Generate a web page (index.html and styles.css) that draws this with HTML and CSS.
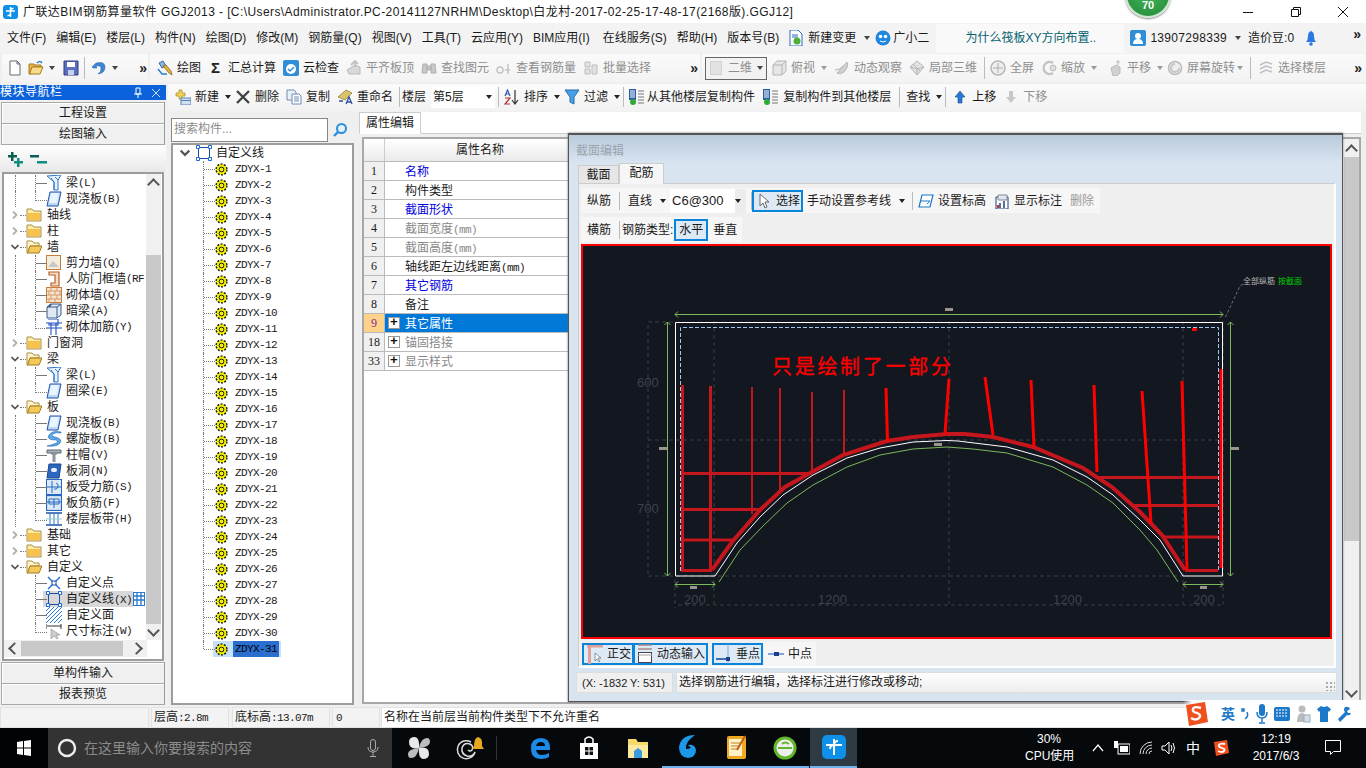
FILE: index.html
```html
<!DOCTYPE html>
<html lang="zh">
<head>
<meta charset="utf-8">
<title>广联达BIM钢筋算量软件</title>
<link rel="stylesheet" href="styles.css">
</head>
<body>
<svg class="defs" width="0" height="0">
  <symbol id="new" viewBox="0 0 16 16"><path d="M3 1h7l3 3v11H3z" fill="#fff" stroke="#667"/><path d="M10 1v3h3z" fill="#dde" stroke="#667"/></symbol>
  <symbol id="open" viewBox="0 0 16 16"><path d="M1 4h5l1 1h6v2H5L3 14H1z" fill="#e9b64c" stroke="#a57a1e"/><path d="M4 7h11l-3 7H1.500z" fill="#f8da8a" stroke="#a57a1e"/><path d="M9 3q3-3 5 0" fill="none" stroke="#3a7fc8" stroke-width="1.500"/></symbol>
  <symbol id="save" viewBox="0 0 16 16"><path d="M1 1h14v14H1z" fill="#5a6fc0" stroke="#2f3c80"/><path d="M4 2h8v5H4z" fill="#fff"/><path d="M5 10h6v5H5z" fill="#c8cfe8"/></symbol>
  <symbol id="undo" viewBox="0 0 16 16"><path d="M5 3l-4 4 1 1h4L5 6q5-1 5 3 0 3-3 5 7-1 7-7 0-6-9-4z" fill="#3f86d2" stroke="#1f5ea8" stroke-width=".5"/></symbol>
  <symbol id="draw" viewBox="0 0 16 16"><path d="M2 3l4-2 3 5-4 2z" fill="#8db5e0" stroke="#3a6ea5"/><path d="M6 6l6 7 3 2-1-4-5-6z" fill="#e6b43c" stroke="#7a5a10" stroke-width=".7"/><path d="M1 9l4 5h5" fill="none" stroke="#2a7fd0" stroke-width="1.500"/></symbol>
  <symbol id="cloud" viewBox="0 0 16 16"><rect x="0" y="0" width="16" height="16" rx="2" fill="#2e8fd8"/><circle cx="8" cy="9" r="5" fill="#fff"/><path d="M5 9l2 2 4-4" fill="none" stroke="#2e8fd8" stroke-width="1.500"/></symbol>
  <symbol id="flat" viewBox="0 0 16 16"><path d="M1 10l8-5 5 2v7H3z" fill="#d8d8d8" stroke="#bbb"/><path d="M9 1v6M5 5l4-4 3 3" fill="none" stroke="#c4c4c4" stroke-width="2"/></symbol>
  <symbol id="binoc" viewBox="0 0 16 16"><path d="M2 4h4v9H1zM10 4h4l1 9h-5zM6 6h4v4H6z" fill="#c8c8c8" stroke="#b0b0b0"/></symbol>
  <symbol id="glass" viewBox="0 0 16 16"><circle cx="4" cy="10" r="3" fill="none" stroke="#c4c4c4" stroke-width="1.500"/><path d="M9 10h5M12 4v10" stroke="#c4c4c4" stroke-width="1.500"/></symbol>
  <symbol id="batch" viewBox="0 0 16 16"><path d="M2 2h5v5H2zM2 9h5v5H2zM9 5h5v9H9z" fill="#e2e2e2" stroke="#bdbdbd"/></symbol>
  <symbol id="cube" viewBox="0 0 16 16"><path d="M2 5l4-4h9v10l-4 4H2z" fill="#e6e6e6" stroke="#b4b4b4"/><path d="M2 5h9v10M11 5l4-4" fill="none" stroke="#b4b4b4"/></symbol>
  <symbol id="orbit" viewBox="0 0 16 16"><path d="M3 13L13 2q2 5-3 10-4 3-7 1z" fill="#cfcfcf" stroke="#b8b8b8"/><path d="M1 10q5 0 8-4" fill="none" stroke="#b0b0b0"/></symbol>
  <symbol id="local3d" viewBox="0 0 16 16"><path d="M8 1l7 6-7 8-7-8z" fill="#e2e2e2" stroke="#b6b6b6"/><path d="M1 7l7 2 7-2M8 9v6M4 4l7 7" fill="none" stroke="#b6b6b6"/></symbol>
  <symbol id="full" viewBox="0 0 16 16"><circle cx="8" cy="8" r="7" fill="#eee" stroke="#b6b6b6" stroke-width="1.500"/><path d="M8 3v10M3 8h10" stroke="#b0b0b0"/></symbol>
  <symbol id="zoomg" viewBox="0 0 16 16"><path d="M12 3a6 6 0 1 0 0 10" fill="none" stroke="#c4c4c4" stroke-width="2.500"/><circle cx="12" cy="8" r="3" fill="#ddd" stroke="#bbb"/></symbol>
  <symbol id="pan" viewBox="0 0 16 16"><path d="M4 8l5-3 4 2v6l-3 3H6z" fill="#d0d0d0" stroke="#bbb"/><path d="M11 0v5M9 2h4" stroke="#bbb"/></symbol>
  <symbol id="rot" viewBox="0 0 16 16"><circle cx="8" cy="8" r="6.500" fill="#eee" stroke="#bbb" stroke-width="1.500"/><path d="M8 4a4 4 0 1 0 4 4" fill="none" stroke="#c4c4c4" stroke-width="2"/></symbol>
  <symbol id="floors" viewBox="0 0 16 16"><path d="M2 5l6-3 6 2M2 9l6-3 6 2M2 13l6-3 6 2" fill="none" stroke="#c0c0c0" stroke-width="1.500"/></symbol>
  <symbol id="plusnew" viewBox="0 0 16 16"><path d="M4 1h3v3h3v3H7v3H4V7H1V4h3z" fill="#f0d25a" stroke="#a88620" stroke-width=".7"/><path d="M6 9h10v7H6z" fill="#cfe0f2" stroke="#5b84b4"/><path d="M6 11.500h10" stroke="#5b84b4"/></symbol>
  <symbol id="cross" viewBox="0 0 16 16"><path d="M2 2l12 12M14 2L2 14" stroke="#444" stroke-width="2.400"/></symbol>
  <symbol id="copy" viewBox="0 0 16 16"><path d="M1 1h7l2 2v8H1z" fill="#e8f0f8" stroke="#6c8cb0"/><path d="M6 5h7l2 2v8H6z" fill="#fff" stroke="#6c8cb0"/><path d="M8 8h5M8 10h5M8 12h5" stroke="#6c8cb0"/></symbol>
  <symbol id="rename" viewBox="0 0 16 16"><path d="M1 8l8-7 6 3-7 7z" fill="#d8c26c" stroke="#8a7420" stroke-width=".7"/><path d="M2 12h4M9 15l3-7 3 7M10 13h4" fill="none" stroke="#2c4ea0" stroke-width="1.300"/></symbol>
  <symbol id="sort" viewBox="0 0 16 16"><path d="M1 7l2.500-6L6 7M2 5h3" fill="none" stroke="#3058b0" stroke-width="1.200"/><path d="M1 9h5l-5 6h5" fill="none" stroke="#b03030" stroke-width="1.200"/><path d="M11 1v13M8 11l3 4 3-4" fill="none" stroke="#333" stroke-width="1.200"/></symbol>
  <symbol id="filter" viewBox="0 0 16 16"><path d="M1 1h14L10 8v7L6 13V8z" fill="#4aa0e6" stroke="#1f6cb0"/></symbol>
  <symbol id="fromf" viewBox="0 0 16 16"><path d="M1 0h7v11H1z" fill="#2c5ea8"/><path d="M2 2h5M2 4h5M2 6h5M2 8h5" stroke="#fff"/><path d="M10 2h6M10 5h6M10 8h6M10 11h6M10 14h6" stroke="#777"/><circle cx="5" cy="13" r="3" fill="#2fa83c"/></symbol>
  <symbol id="up" viewBox="0 0 16 16"><path d="M8 2l5 6h-3v6H6V8H3z" fill="#2c78d0" stroke="#1a4f92" stroke-width=".6"/></symbol>
  <symbol id="down" viewBox="0 0 16 16"><path d="M8 14l5-6h-3V2H6v6H3z" fill="#c8c8c8"/></symbol>
  <symbol id="gear" viewBox="0 0 13 13"><circle cx="6.500" cy="6.500" r="5.400" fill="#f4f100" stroke="#111" stroke-width="1.400" stroke-dasharray="2 1.400"/><circle cx="6.500" cy="6.500" r="2.400" fill="#f4f100" stroke="#111"/></symbol>
  <symbol id="custline" viewBox="0 0 16 16"><rect x="2.500" y="2.500" width="11" height="11" fill="none" stroke="#1c4fa8"/><path d="M.5.500h3v3h-3zM12.500.500h3v3h-3zM.5 12.500h3v3h-3zM12.500 12.500h3v3h-3z" fill="#fff" stroke="#1c6ad0"/></symbol>
  <symbol id="fclosed" viewBox="0 0 16 16"><path d="M1 2h5l2 2h7v10H1z" fill="#ffe9a8" stroke="#a89048"/><path d="M2 6h12v7H2z" fill="#f6c24c"/></symbol>
  <symbol id="fopen" viewBox="0 0 16 16"><path d="M1 2h5l2 2h5v3H4l-2 7H1z" fill="#fff3c8" stroke="#a89048"/><path d="M4 7h12l-3 7H1.500z" fill="#f6c858" stroke="#a07c28"/></symbol>
  <symbol id="cv" viewBox="0 0 8 8"><path d="M.5 2l3.500 3.500L7.500 2" fill="none" stroke="#555" stroke-width="1.700"/></symbol>
  <symbol id="cr" viewBox="0 0 8 8"><path d="M2 .5l3.500 3.500L2 7.500" fill="none" stroke="#b0b0b0" stroke-width="1.900"/></symbol>
  <symbol id="beam" viewBox="0 0 16 16"><path d="M1 1l14-1-3 5v10H8V7z" fill="#e8f2fb" stroke="#2f78c8"/><path d="M5 3l3 4M9 2l3 3M8 7v8" stroke="#2f78c8"/></symbol>
  <symbol id="slab" viewBox="0 0 16 16"><path d="M4 1h11l-3 14H1z" fill="#bcd8f4" stroke="#1c54a8"/><path d="M5 2h8l-2 10H3z" fill="#e8f4ff"/></symbol>
  <symbol id="shear" viewBox="0 0 16 16"><rect x=".5" y=".5" width="14" height="14" fill="#f4ecdc" stroke="#c87c3c"/><path d="M2 12l5-6 6 6z" fill="#c8c8c8"/></symbol>
  <symbol id="rfwall" viewBox="0 0 16 16"><path d="M3 1h10v14H5v-3h4V4H3z" fill="#f6dcc0" stroke="#b8602c" stroke-width="1.200"/></symbol>
  <symbol id="brick" viewBox="0 0 16 16"><rect x=".5" y=".5" width="15" height="15" fill="#f6e4d0" stroke="#c87c3c"/><path d="M0 4h16M0 8h16M0 12h16M5 0v4M11 0v4M3 4v4M9 4v4M14 4v4M5 8v4M11 8v4M3 12v4M9 12v4" stroke="#d0894c" stroke-width=".8"/></symbol>
  <symbol id="dark" viewBox="0 0 16 16"><path d="M1 4l4-3h10v11l-4 3H1z" fill="#dfe9f4" stroke="#3a5a88"/><path d="M1 4h10v11M11 4l4-3" fill="none" stroke="#3a5a88"/><path d="M5 1l-2 3" stroke="#3a5a88" stroke-width="2"/></symbol>
  <symbol id="masonry" viewBox="0 0 16 16"><path d="M0 4h16M3 4v2h9V4M0 9h16M5 4v12M10 4v12M2 0h10v4" fill="none" stroke="#1c4fc0" stroke-width="1.100"/></symbol>
  <symbol id="spiral" viewBox="0 0 16 16"><path d="M15 1Q6-1 3 4t7 5q4 2-2 4t-7 2q10 1 13-3t-5-6Q4 5 7 3t8-1z" fill="#5ca8e8" stroke="#1c64b4" stroke-width=".6"/></symbol>
  <symbol id="cap" viewBox="0 0 16 16"><path d="M1 3h14v3H1z" fill="#a8b0b8" stroke="#606870"/><path d="M4 6h8l-2 2H6zM6.500 8h3v7h-3z" fill="#8c949c"/></symbol>
  <symbol id="hole" viewBox="0 0 16 16"><path d="M3 1h12l-2 14H1z" fill="#2c68c0" stroke="#1c4490"/><rect x="5" y="5" width="6" height="4" rx="2" fill="#eaf4ff"/></symbol>
  <symbol id="sbar" viewBox="0 0 16 16"><rect x=".5" y=".5" width="15" height="15" fill="#dce9f6" stroke="#2468c0"/><path d="M6 2v12M1 8h14M10 4a3 3 0 1 1-2 6" fill="none" stroke="#2468c0"/></symbol>
  <symbol id="nbar" viewBox="0 0 16 16"><rect x=".5" y=".5" width="15" height="15" fill="#dce9f6" stroke="#2468c0" stroke-width="1.200"/><path d="M3 4h10v5H3zM8 4v9M1 7h14" fill="none" stroke="#2468c0"/></symbol>
  <symbol id="band" viewBox="0 0 16 16"><path d="M0 2h16M0 14h16" stroke="#1c54a8" stroke-width="1.400"/><path d="M4 2v12M12 2v12M8 2v12" stroke="#2c78c8"/><path d="M0 8h16" stroke="#9cc" /></symbol>
  <symbol id="xpoint" viewBox="0 0 16 16"><path d="M2 2l12 12M14 2L2 14" stroke="#1c6ad0" stroke-width="1.300"/><rect x="6" y="6" width="4" height="4" fill="#fff" stroke="#1c4fa8"/></symbol>
  <symbol id="hatch" viewBox="0 0 16 16"><path d="M0 4L4 0M0 8l8-8M0 12L12 0M0 16L16 0M4 16L16 4M8 16l8-8M12 16l4-4" stroke="#2a7ad8"/></symbol>
  <symbol id="dim" viewBox="0 0 16 16"><path d="M0 1v5M15 1v5M1 3h14" stroke="#333"/><path d="M5 6v10l3-3 3 3 1-1-2-3h4z" fill="#ccc" stroke="#999" stroke-width=".7"/></symbol>
  <symbol id="dlgi" viewBox="0 0 12 14"><rect x=".5" y=".5" width="11" height="13" fill="#fff" stroke="#2a78d0"/><path d="M4 1v12M8 1v12M1 4h10M1 8h10" stroke="#2a78d0" stroke-width="1.300"/></symbol>
  <symbol id="doccg" viewBox="0 0 16 16"><path d="M2 0h8l4 4v12H2z" fill="#fff" stroke="#2c68c0"/><path d="M4 5h6M4 7h6" stroke="#2c68c0"/><circle cx="9" cy="11" r="3.500" fill="#4fae34"/></symbol>
  <symbol id="robot" viewBox="0 0 16 16"><circle cx="8" cy="8" r="7.500" fill="#1e88e0"/><circle cx="5.500" cy="6.500" r="1.800" fill="#fff"/><circle cx="10.500" cy="6.500" r="1.800" fill="#fff"/><path d="M5 11q3 2 6 0" fill="none" stroke="#fff"/></symbol>
  <symbol id="user" viewBox="0 0 16 16"><rect width="16" height="16" rx="2" fill="#2e8fd8"/><circle cx="8" cy="6" r="3" fill="#fff"/><path d="M3 14q0-5 5-5t5 5z" fill="#fff"/></symbol>
  <symbol id="bell" viewBox="0 0 16 16"><path d="M3 12q2-2 2-6t3-5q3 1 3 5t2 6z" fill="#2c78e0"/><circle cx="8" cy="14" r="1.800" fill="#2c78e0"/></symbol>
  <symbol id="cursor" viewBox="0 0 16 16"><path d="M4 1v12l3-3 2 5 2-1-2-5h4z" fill="#fff" stroke="#666"/></symbol>
  <symbol id="setelev" viewBox="0 0 16 16"><path d="M4 2h11l-3 12H1z" fill="#fff" stroke="#1c78c8" stroke-width="1.200"/><path d="M2 8h10l-3 3" fill="none" stroke="#1c78c8"/></symbol>
  <symbol id="showdim" viewBox="0 0 14 16"><path d="M1 4h12v12H1z" fill="#fff" stroke="#1c4478"/><path d="M3 2h9v5H3z" fill="#dfe6f0" stroke="#889"/><path d="M5 10v5M9 8v7" stroke="#1c4478" stroke-width="1.500"/><rect x="2" y="12" width="2" height="3" fill="#d03020"/></symbol>
  <symbol id="ortho" viewBox="0 0 16 20"><path d="M0 1h16v2.500H4V20H1V3.500H0z" fill="#e0a098"/><path d="M8 9v8l2-2 2 3 1-1-2-3h3z" fill="#fff" stroke="#667" stroke-width=".7"/></symbol>
  <symbol id="dyn" viewBox="0 0 16 20"><path d="M1 1h14M1 5h14" stroke="#aa8888" stroke-width="1.400"/><rect x="1.500" y="8.500" width="13" height="10" fill="#fff" stroke="#445"/><path d="M1 11h14" stroke="#a0a0a0"/></symbol>
  <symbol id="perp" viewBox="0 0 16 20"><path d="M0 15h14" stroke="#1c4ea0" stroke-width="1.600"/><path d="M12 0v20" stroke="#7aa8d8"/><rect x="10" y="13" width="4" height="4" fill="#1c3e8c"/></symbol>
  <symbol id="mid" viewBox="0 0 16 8"><path d="M0 4h16" stroke="#5a8ad0" stroke-width="1.500"/><rect x="6" y="2" width="5" height="4" fill="#1c3e8c"/></symbol>
  <symbol id="tile" viewBox="0 0 16 16"><path d="M1 2l6-1v6.500H1zM8 1l7-1v7.500H8zM1 8.500h6V15l-6-1zM8 8.500h7V16l-7-1z" fill="#fff"/></symbol>
</svg>

<header class="titlebar">
  <svg class="i app"><rect y="1" width="15" height="14" rx="3" fill="#0f90e8"/><path d="M7.500 3v10M3 7h9M7.500 7a2.500 2.500 0 0 1 3-2.500M7.500 9a2.500 2.500 0 0 1-3 2.500" fill="none" stroke="#fff" stroke-width="1.500"/></svg>
  <span class="title">广联达BIM钢筋算量软件 GGJ2013 - [C:\Users\Administrator.PC-20141127NRHM\Desktop\白龙村-2017-02-25-17-48-17(2168版).GGJ12]</span>
  <span class="winbtn"><svg width="12" height="12"><path d="M1 6.500h10" stroke="#111"/></svg></span>
  <span class="winbtn"><svg width="12" height="12"><path d="M1.500 3.500h7v7h-7zM3.500 3V1.500h7v7H9" fill="none" stroke="#111"/></svg></span>
  <span class="winbtn"><svg width="12" height="12"><path d="M1 1l10 10M11 1L1 11" stroke="#111"/></svg></span>
</header>

<div class="badge"><span>70</span></div>

<nav class="menubar">
  <span>文件(F)</span><span>编辑(E)</span><span>楼层(L)</span><span>构件(N)</span><span>绘图(D)</span><span>修改(M)</span><span>钢筋量(Q)</span><span>视图(V)</span><span>工具(T)</span><span>云应用(Y)</span><span>BIM应用(I)</span><span class="mol">在线服务(S)</span><span>帮助(H)</span><span>版本号(B)</span>
  <span class="it mi"><svg class="i"><use href="#doccg"/></svg>新建变更<i class="ar ar8"></i></span>
  <span class="it mi2"><svg class="i"><use href="#robot"/></svg>广小二</span>
  <span class="news">为什么筏板XY方向布置..</span>
  <span class="it usr"><svg class="i"><use href="#user"/></svg><span class="phone">13907298339</span><i class="ar ar8"></i></span>
  <span class="dou">造价豆:0</span>
  <svg class="i bell"><use href="#bell"/></svg>
  <span class="more more-m">»</span>
</nav>

<div class="toolrow">
  <div class="seg seg1">
    <svg class="i"><use href="#new"/></svg>
    <svg class="i"><use href="#open"/></svg><i class="ar"></i>
    <svg class="i sv"><use href="#save"/></svg>
    <i class="sep"></i>
    <svg class="i ud"><use href="#undo"/></svg><i class="ar"></i>
    <span class="more">»</span>
  </div>
  <div class="seg seg2">
    <span class="it"><svg class="i"><use href="#draw"/></svg>绘图</span>
    <span class="it sig"><b>Σ</b>汇总计算</span>
    <span class="it"><svg class="i"><use href="#cloud"/></svg>云检查</span>
    <span class="it off"><svg class="i"><use href="#flat"/></svg>平齐板顶</span>
    <span class="it off"><svg class="i"><use href="#binoc"/></svg>查找图元</span>
    <span class="it off"><svg class="i"><use href="#glass"/></svg>查看钢筋量</span>
    <span class="it off"><svg class="i"><use href="#batch"/></svg>批量选择</span>
    <span class="more">»</span>
  </div>
  <div class="seg seg3">
    <span class="combo2"><i class="sq"></i><span class="nw">二维</span><i class="ar"></i></span>
    <span class="it off fs"><svg class="i"><use href="#cube"/></svg>俯视<i class="ar ar8 gr"></i></span>
    <span class="it off"><svg class="i"><use href="#orbit"/></svg>动态观察</span>
    <span class="it off"><svg class="i"><use href="#local3d"/></svg>局部三维</span>
    <i class="sep sn"></i>
    <span class="it off"><svg class="i"><use href="#full"/></svg>全屏</span>
    <span class="it off"><svg class="i"><use href="#zoomg"/></svg>缩放<i class="ar ar8 gr"></i></span>
    <span class="it off py"><svg class="i"><use href="#pan"/></svg>平移<i class="ar ar8 gr"></i></span>
    <span class="it off xz"><svg class="i"><use href="#rot"/></svg>屏幕旋转<i class="ar gr"></i></span>
    <i class="sep"></i>
    <span class="it off"><svg class="i"><use href="#floors"/></svg>选择楼层</span>
    <span class="more">»</span>
  </div>
</div>

<main class="main">
  <aside class="nav">
    <div class="navhead"><span>模块导航栏</span>
      <svg class="navpin" width="10" height="12"><path d="M3 1h4v6H3zM1 7h8M5 7v4" fill="none" stroke="#fff"/></svg>
      <svg class="navx" width="10" height="10"><path d="M1 1l8 8M9 1L1 9" stroke="#cfe0ff"/></svg>
    </div>
    <div class="navbtn">工程设置</div>
    <div class="navbtn">绘图输入</div>
    <div class="navtools">
      <svg width="17" height="18"><path d="M4 2h2.500v3H10v2.500H6.500V11H4V7.500H1V5h3z" fill="#0b5f50"/><path d="M10 8h2.500v3H16v2.500h-3.500V17H10v-3.500H7V11h3z" fill="#0d8e7e"/></svg>
      <svg width="17" height="18"><path d="M0 5h9v2.500H0z" fill="#0b5f50"/><path d="M7 11h10v2.500H7z" fill="#0d8e7e"/></svg>
    </div>
    <div class="treebox">
      <div class="tree">
        <div class="r leaf"><svg class="i"><use href="#beam"/></svg>梁<i class="m">(L)</i></div>
        <div class="r leaf end"><svg class="i"><use href="#slab"/></svg>现浇板<i class="m">(B)</i></div>
        <div class="r f"><svg class="c"><use href="#cr"/></svg><svg class="i"><use href="#fclosed"/></svg>轴线</div>
        <div class="r f"><svg class="c"><use href="#cr"/></svg><svg class="i"><use href="#fclosed"/></svg>柱</div>
        <div class="r f"><svg class="c"><use href="#cv"/></svg><svg class="i"><use href="#fopen"/></svg>墙</div>
        <div class="r leaf"><svg class="i"><use href="#shear"/></svg>剪力墙<i class="m">(Q)</i></div>
        <div class="r leaf"><svg class="i"><use href="#rfwall"/></svg>人防门框墙<i class="m">(RF</i></div>
        <div class="r leaf"><svg class="i"><use href="#brick"/></svg>砌体墙<i class="m">(Q)</i></div>
        <div class="r leaf"><svg class="i"><use href="#dark"/></svg>暗梁<i class="m">(A)</i></div>
        <div class="r leaf end"><svg class="i"><use href="#masonry"/></svg>砌体加筋<i class="m">(Y)</i></div>
        <div class="r f"><svg class="c"><use href="#cr"/></svg><svg class="i"><use href="#fclosed"/></svg>门窗洞</div>
        <div class="r f"><svg class="c"><use href="#cv"/></svg><svg class="i"><use href="#fopen"/></svg>梁</div>
        <div class="r leaf"><svg class="i"><use href="#beam"/></svg>梁<i class="m">(L)</i></div>
        <div class="r leaf end"><svg class="i"><use href="#slab"/></svg>圈梁<i class="m">(E)</i></div>
        <div class="r f"><svg class="c"><use href="#cv"/></svg><svg class="i"><use href="#fopen"/></svg>板</div>
        <div class="r leaf"><svg class="i"><use href="#slab"/></svg>现浇板<i class="m">(B)</i></div>
        <div class="r leaf"><svg class="i"><use href="#spiral"/></svg>螺旋板<i class="m">(B)</i></div>
        <div class="r leaf"><svg class="i"><use href="#cap"/></svg>柱帽<i class="m">(V)</i></div>
        <div class="r leaf"><svg class="i"><use href="#hole"/></svg>板洞<i class="m">(N)</i></div>
        <div class="r leaf"><svg class="i"><use href="#sbar"/></svg>板受力筋<i class="m">(S)</i></div>
        <div class="r leaf"><svg class="i"><use href="#nbar"/></svg>板负筋<i class="m">(F)</i></div>
        <div class="r leaf end"><svg class="i"><use href="#band"/></svg>楼层板带<i class="m">(H)</i></div>
        <div class="r f"><svg class="c"><use href="#cr"/></svg><svg class="i"><use href="#fclosed"/></svg>基础</div>
        <div class="r f"><svg class="c"><use href="#cr"/></svg><svg class="i"><use href="#fclosed"/></svg>其它</div>
        <div class="r f"><svg class="c"><use href="#cv"/></svg><svg class="i"><use href="#fopen"/></svg>自定义</div>
        <div class="r leaf nop"><svg class="i"><use href="#xpoint"/></svg>自定义点</div>
        <div class="r leaf nop cur"><svg class="i"><use href="#custline"/></svg><span class="curlabel">自定义线<i class="m">(X)</i></span><svg class="dlgi"><use href="#dlgi"/></svg></div>
        <div class="r leaf nop"><svg class="i"><use href="#hatch"/></svg>自定义面</div>
        <div class="r leaf nop end"><svg class="i"><use href="#dim"/></svg>尺寸标注<i class="m">(W)</i></div>
      </div>
      <div class="vsb"><span class="sbtn up"></span><span class="vtrack"><i class="vthumb"></i></span><span class="sbtn dn"></span></div>
      <div class="hsb"><span class="hl"></span><i class="hthumb"></i><span class="hr"></span></div>
    </div>
    <div class="navbtn">单构件输入</div>
    <div class="navbtn">报表预览</div>
  </aside>

  <section class="work">
    <div class="toolrow2">
      <span class="it"><svg class="i"><use href="#plusnew"/></svg>新建<i class="ar dk"></i></span>
      <span class="it"><svg class="i"><use href="#cross"/></svg>删除</span>
      <span class="it"><svg class="i"><use href="#copy"/></svg>复制</span>
      <span class="it"><svg class="i"><use href="#rename"/></svg>重命名</span>
      <i class="sep sepa"></i>
      <span>楼层</span>
      <span class="floorcombo">第5层<i class="ar dk"></i></span>
      <i class="sep sepb"></i>
      <span class="it"><svg class="i"><use href="#sort"/></svg>排序<i class="ar dk"></i></span>
      <span class="it"><svg class="i"><use href="#filter"/></svg>过滤<i class="ar dk"></i></span>
      <i class="sep"></i>
      <span class="it cp1"><svg class="i"><use href="#fromf"/></svg>从其他楼层复制构件</span>
      <span class="it cp2"><svg class="i"><use href="#fromf"/></svg>复制构件到其他楼层</span>
      <i class="sep"></i>
      <span class="it">查找<i class="ar dk"></i></span>
      <i class="sep"></i>
      <span class="it"><svg class="i"><use href="#up"/></svg>上移</span>
      <span class="it off"><svg class="i"><use href="#down"/></svg>下移</span>
    </div>
    <div class="workbody">
      <div class="complist">
        <div class="search"><span class="sinput">搜索构件...</span>
          <svg class="sicon" width="16" height="16"><circle cx="9.500" cy="6.500" r="4.500" fill="#e4f2fc" stroke="#2c8ed8" stroke-width="2"/><path d="M6 10l-4 4" stroke="#2c8ed8" stroke-width="2.400"/></svg>
        </div>
        <div class="ctree">
          <div class="croot"><svg class="c"><use href="#cv"/></svg><svg class="i"><use href="#custline"/></svg>自定义线</div>
          <div class="z"><svg class="g"><use href="#gear"/></svg><i class="m">ZDYX-1</i></div>
          <div class="z"><svg class="g"><use href="#gear"/></svg><i class="m">ZDYX-2</i></div>
          <div class="z"><svg class="g"><use href="#gear"/></svg><i class="m">ZDYX-3</i></div>
          <div class="z"><svg class="g"><use href="#gear"/></svg><i class="m">ZDYX-4</i></div>
          <div class="z"><svg class="g"><use href="#gear"/></svg><i class="m">ZDYX-5</i></div>
          <div class="z"><svg class="g"><use href="#gear"/></svg><i class="m">ZDYX-6</i></div>
          <div class="z"><svg class="g"><use href="#gear"/></svg><i class="m">ZDYX-7</i></div>
          <div class="z"><svg class="g"><use href="#gear"/></svg><i class="m">ZDYX-8</i></div>
          <div class="z"><svg class="g"><use href="#gear"/></svg><i class="m">ZDYX-9</i></div>
          <div class="z"><svg class="g"><use href="#gear"/></svg><i class="m">ZDYX-10</i></div>
          <div class="z"><svg class="g"><use href="#gear"/></svg><i class="m">ZDYX-11</i></div>
          <div class="z"><svg class="g"><use href="#gear"/></svg><i class="m">ZDYX-12</i></div>
          <div class="z"><svg class="g"><use href="#gear"/></svg><i class="m">ZDYX-13</i></div>
          <div class="z"><svg class="g"><use href="#gear"/></svg><i class="m">ZDYX-14</i></div>
          <div class="z"><svg class="g"><use href="#gear"/></svg><i class="m">ZDYX-15</i></div>
          <div class="z"><svg class="g"><use href="#gear"/></svg><i class="m">ZDYX-16</i></div>
          <div class="z"><svg class="g"><use href="#gear"/></svg><i class="m">ZDYX-17</i></div>
          <div class="z"><svg class="g"><use href="#gear"/></svg><i class="m">ZDYX-18</i></div>
          <div class="z"><svg class="g"><use href="#gear"/></svg><i class="m">ZDYX-19</i></div>
          <div class="z"><svg class="g"><use href="#gear"/></svg><i class="m">ZDYX-20</i></div>
          <div class="z"><svg class="g"><use href="#gear"/></svg><i class="m">ZDYX-21</i></div>
          <div class="z"><svg class="g"><use href="#gear"/></svg><i class="m">ZDYX-22</i></div>
          <div class="z"><svg class="g"><use href="#gear"/></svg><i class="m">ZDYX-23</i></div>
          <div class="z"><svg class="g"><use href="#gear"/></svg><i class="m">ZDYX-24</i></div>
          <div class="z"><svg class="g"><use href="#gear"/></svg><i class="m">ZDYX-25</i></div>
          <div class="z"><svg class="g"><use href="#gear"/></svg><i class="m">ZDYX-26</i></div>
          <div class="z"><svg class="g"><use href="#gear"/></svg><i class="m">ZDYX-27</i></div>
          <div class="z"><svg class="g"><use href="#gear"/></svg><i class="m">ZDYX-28</i></div>
          <div class="z"><svg class="g"><use href="#gear"/></svg><i class="m">ZDYX-29</i></div>
          <div class="z"><svg class="g"><use href="#gear"/></svg><i class="m">ZDYX-30</i></div>
          <div class="z last"><svg class="g"><use href="#gear"/></svg><i class="m sel">ZDYX-31</i></div>
        </div>
      </div>
      <div class="props">
        <div class="tabstrip"><span class="tab">属性编辑</span></div>
        <div class="gridframe">
          <div class="grid">
            <div class="ghead"><span class="n"></span><span class="l">属性名称</span></div>
            <div class="row"><span class="n">1</span><span class="v blue">名称</span></div>
            <div class="row"><span class="n">2</span><span class="v">构件类型</span></div>
            <div class="row"><span class="n">3</span><span class="v blue">截面形状</span></div>
            <div class="row"><span class="n">4</span><span class="v gray">截面宽度<i class="m">(mm)</i></span></div>
            <div class="row"><span class="n">5</span><span class="v gray">截面高度<i class="m">(mm)</i></span></div>
            <div class="row"><span class="n">6</span><span class="v">轴线距左边线距离<i class="m">(mm)</i></span></div>
            <div class="row"><span class="n">7</span><span class="v blue">其它钢筋</span></div>
            <div class="row"><span class="n">8</span><span class="v">备注</span></div>
            <div class="row on"><span class="n">9</span><span class="v"><b class="pm">+</b>其它属性</span></div>
            <div class="row"><span class="n">18</span><span class="v gray"><b class="pm">+</b>锚固搭接</span></div>
            <div class="row"><span class="n">33</span><span class="v gray"><b class="pm">+</b>显示样式</span></div>
          </div>
          <div class="gsb"><span class="sbtn up"></span><span class="gtrack"><i class="gthumb"></i></span><span class="sbtn dn"></span></div>
        </div>
      </div>
    </div>
  </section>
</main>

<div class="dialog">
  <div class="dtitle">截面编辑</div>
  <div class="dtabs"><span class="dt">截面</span><span class="dt act">配筋</span></div>
  <div class="dpanel">
    <div class="dbar b1">
      <span>纵筋</span><i class="sep"></i>
      <span class="it">直线<i class="ar dk"></i></span>
      <span class="rcombo">C6@300<i class="ar dk"></i></span><i class="sep sc"></i>
      <span class="tog sel1"><svg class="i"><use href="#cursor"/></svg>选择</span>
      <span class="it hd">手动设置参考线<i class="ar dk"></i></span><i class="sep sh"></i>
      <span class="it"><svg class="i"><use href="#setelev"/></svg>设置标高</span>
      <span class="it"><svg class="i"><use href="#showdim"/></svg>显示标注</span>
      <span class="offtx">删除</span>
    </div>
    <div class="dbar b2">
      <span>横筋</span><i class="sep"></i>
      <span class="rt">钢筋类型:</span>
      <span class="tog pad">水平</span>
      <span>垂直</span>
    </div>
    <div class="canvas">
      <svg class="cad" width="747" height="391" viewBox="583 246 747 391">
        <g class="axis">
          <path d="M645 322H675M645 440H1228M645 576H1183M648 322V576M714 318V608M949 318V608M1183 318V608M1223 318V608M675 605H1223M675 576V608"/>
        </g>
        <g class="axisd">
          <path d="M645 322H675M645 440H1228M645 576H1183M648 322V576M714 318V608M949 318V608M1183 318V608M1223 318V608M675 605H1223M675 576V608"/>
        </g>
        <g class="dimg">
          <path d="M675 314.500H1223M667.500 322V576M1230.500 322V576M675 584.500H715M1183 584.500H1223"/>
          <path d="M678 311.500L675 314.500L678 317.500M1220 311.500L1223 314.500L1220 317.500M664.500 325L667.500 322L670.500 325M664.500 573L667.500 576L670.500 573M1227.500 325L1230.500 322L1233.500 325M1227.500 573L1230.500 576L1233.500 573M678 581.500L675 584.500L678 587.500M712 581.500L715 584.500L712 587.500M1186 581.500L1183 584.500L1186 587.500M1220 581.500L1223 584.500L1220 587.500"/>
          <path d="M719 582L740 550L762 527L787 503L813 485L847 467L880 455L913 449L947 447L973 449L1007 453L1053 467L1087 485L1113 503L1140 530L1157 550L1178 582"/>
        </g>
        <path class="wht" d="M715 576H675.500V322.500H1222.500V576H1183L1160 540L1140 520L1113 495L1087 477L1053 460L1007 447L958 441L947 440.500L913 442L880 448L847 458L813 475L783 495L760 517L737 543Z"/>
        <path class="ins" d="M680.500 571V327.500H1218.500V571"/>
        <g class="redd">
          <path class="w4" d="M712 570L732 542L760 510L785 487L812 472L843 455L887 441L913 437L947 434L965 434L993 437L1033 447L1083 468L1112 487L1140 512L1162 535L1185 570"/>
          <path class="w3" d="M681 473.500H812M681 509.500H762M681 540H732M681 570.500H712M682.500 385V570M710.500 386V570M1095 477.500H1218M1132 505.500H1218M1162 537H1218M1185 570.500H1218"/>
          <path class="w2" d="M752 387V514M780 388V490M812 392V473M844 390V455"/>
        </g>
        <g class="redb">
          <path d="M886 388L887.500 441M949 379L945 434M985 377L993 435M1031 380L1034 447M1094 385L1097 472M1142 391L1151 523M1182 381L1187 570M1221 369V568"/>
          <rect x="1192" y="328" width="5" height="3"/>
        </g>
        <g class="marks">
          <rect x="945" y="308" width="8" height="3"/><rect x="659" y="447" width="8" height="3"/><rect x="690" y="586" width="7" height="3"/><rect x="934" y="443" width="8" height="3"/><rect x="1200" y="586" width="7" height="3"/><rect x="1231" y="447" width="8" height="3"/>
        </g>
        <path class="lead" d="M1243 284L1240 286L1225 318"/>
        <text class="tgray" x="1243" y="284">全部纵筋</text><text class="tgreen" x="1278" y="284">按截面</text>
        <text class="tred" x="772" y="374">只是绘制了一部分</text>
        <g class="tdim">
          <text x="637" y="387">600</text><text x="637" y="513">700</text><text x="684" y="604">200</text><text x="818" y="604">1200</text><text x="1053" y="604">1200</text><text x="1193" y="604">200</text>
        </g>
      </svg>
    </div>
    <div class="dbar b3">
      <span class="tog o1"><svg class="i20"><use href="#ortho"/></svg>正交</span>
      <span class="tog o2"><svg class="i20"><use href="#dyn"/></svg>动态输入</span>
      <span class="tog o3"><svg class="i20"><use href="#perp"/></svg>垂点</span>
      <span class="midp"><svg class="i8"><use href="#mid"/></svg>中点</span>
    </div>
  </div>
  <div class="dstatus"><span class="coord">(X: -1832 Y: 531)</span><span class="hint">选择钢筋进行编辑，选择标注进行修改或移动;<i class="grip"></i></span></div>
</div>

<footer class="status">
  <span class="cell c0"></span>
  <span class="cell c1">层高<i class="m">:2.8m</i></span>
  <span class="cell c2">底标高<i class="m">:13.07m</i></span>
  <span class="cell c3"><i class="m">0</i></span>
  <span class="cell c4">名称在当前层当前构件类型下不允许重名</span>
</footer>

<div class="ime">
  <svg width="26" height="26"><path d="M3 4l19-3 3 20-19 4z" fill="#f0501e"/><path d="M18 7q-7-2-8 1t4 4q5 2 2 5t-8 0" fill="none" stroke="#fff" stroke-width="2.400"/></svg>
  <b class="imeying">英</b>
  <svg width="10" height="14"><path d="M2 2h2v2H2zM7 5q2 4-2 7" fill="none" stroke="#1c78c8" stroke-width="1.500"/></svg>
  <svg width="12" height="20"><rect x="3" y="0" width="6" height="12" rx="3" fill="#1c78c8"/><path d="M1 8q0 6 5 6t5-6M6 14v4M3 19h6" fill="none" stroke="#1c78c8" stroke-width="1.500"/></svg>
  <svg width="16" height="14"><rect width="16" height="14" rx="2" fill="#1c78c8"/><path d="M2 3h12M2 6h12M2 9h12" stroke="#fff" stroke-dasharray="2 1"/></svg>
  <svg width="15" height="18"><circle cx="6" cy="4" r="3.500" fill="#bbb"/><path d="M1 17q0-9 5-9t5 9z" fill="#bbb"/><rect x="8" y="10" width="6" height="7" fill="#d4dde8" stroke="#9ab"/></svg>
  <svg width="14" height="16"><path d="M4 0L0 3l2 3 1-1v11h8V5l1 1 2-3-4-3q-3 2-6 0z" fill="#1c78c8"/></svg>
  <svg width="14" height="16"><path d="M13 3q-1-3-5-2-2 3 0 5L1 13l2 3 7-7q3 1 4-2l-3 0-1-2z" fill="#1c78c8"/></svg>
</div>

<footer class="taskbar">
  <span class="start"><svg class="win"><use href="#tile"/></svg></span>
  <div class="tsearch">
    <svg class="cort" width="20" height="20"><circle cx="10" cy="10" r="8" fill="none" stroke="#eee" stroke-width="2.400"/></svg>
    <span class="tstext">在这里输入你要搜索的内容</span>
    <svg class="tmic" width="12" height="18"><rect x="3.500" y=".5" width="5" height="11" rx="2.500" fill="none" stroke="#aaa"/><path d="M1 8q0 5 5 5t5-5M6 13v4M3 17.500h6" fill="none" stroke="#aaa"/></svg>
  </div>
  <div class="tapps">
    <span class="ta"><svg width="24" height="24"><path d="M12 12Q2 14 2 6q0-5 6-5 5 1 4 11zM12 12q10-2 10 6 0 5-6 5-5-1-4-11z" fill="#e8e8e8"/><path d="M12 12Q14 2 20 2q3 0 3 4 0 5-11 6zM12 12q-2 10-8 10-3 0-3-4 0-5 11-6z" fill="#bcbcbc"/></svg></span>
    <span class="ta"><svg width="36" height="28"><path d="M20 8a9 9 0 1 0 4 10q-2 5-8 4-6-2-5-8 2-6 8-4 4 2 2 6-2 2-4 0" fill="none" stroke="#ddd" stroke-width="1.500"/><path d="M23 12q0-8 4-9 5 1 4 9l2 3H21z" fill="#e8a820"/></svg></span>
    <i class="tsep"></i>
    <span class="ta"><svg width="24" height="24"><path d="M22 14H8q1 5 6 5 4 0 7-2v4q-3 2-8 2-10 0-10-11Q3 2 13 2q9 0 9 10zM8 10h9q0-4-4-4-4 0-5 4z" fill="#1c8ae8"/></svg></span>
    <span class="ta"><svg width="22" height="26"><path d="M2 8h18v16H2z" fill="#fff"/><path d="M7 8V4q4-4 8 0v4" fill="none" stroke="#fff" stroke-width="1.500"/><path d="M7 12h3.500v3.500H7zM11.500 12H15v3.500h-3.500zM7 16.500h3.500V20H7zM11.500 16.500H15V20h-3.500z" fill="#111"/></svg></span>
    <span class="ta"><svg width="24" height="24"><path d="M2 3h8l2 3h10v16H2z" fill="#f8d868"/><path d="M2 9h20v13H2z" fill="#fce9a0"/><path d="M8 22v-7l4-3 4 3v7z" fill="#3a9ae0"/></svg></span>
    <span class="ta act1"><svg width="24" height="28"><path d="M20 2Q6 2 4 14q0 10 9 11 8-1 8-8-1-6-8-5l3 3q-3 1-5 1-1-7 9-14z" fill="#1c98e8"/></svg></span>
    <span class="ta act1"><svg width="24" height="26"><rect x="3" y="2" width="19" height="23" rx="2" fill="#f0a820"/><rect x="5" y="5" width="13" height="17" fill="#fff2c8"/><path d="M7 9h9M7 12h9M7 15h7" stroke="#c08020"/><path d="M21 2l-8 14" stroke="#c06010" stroke-width="2"/></svg></span>
    <span class="ta act1"><svg width="26" height="26"><circle cx="13" cy="14" r="10" fill="#eee" stroke="#62b82c" stroke-width="3"/><path d="M6 14h14M10 10q3-3 7 0" fill="none" stroke="#62b82c" stroke-width="2"/></svg></span>
    <span class="ta act2"><svg width="26" height="26"><rect x="1" y="1" width="24" height="24" rx="5" fill="#0f90e8"/><path d="M13 5v16M5 11h16M13 11a4 4 0 0 1 4-4M13 11a4 4 0 0 0-4 4" fill="none" stroke="#fff" stroke-width="2"/></svg></span>
  </div>
  <div class="tray">
    <span class="cpu">30%<br>CPU使用</span>
    <svg class="tup" width="12" height="8"><path d="M1 7l5-6 5 6" fill="none" stroke="#fff" stroke-width="1.200"/></svg>
    <svg class="t1" width="16" height="14"><rect x="4" y="3" width="12" height="10" fill="none" stroke="#fff"/><rect x="6" y="5" width="8" height="6" fill="#fff"/><path d="M0 0h4v7H0z" fill="#fff"/></svg>
    <svg class="t2" width="16" height="14"><path d="M1 13a12 12 0 0 1 12-12M4 13a9 9 0 0 1 9-9M7 13a6 6 0 0 1 6-6M10 13a3 3 0 0 1 3-3" fill="none" stroke="#ddd"/></svg>
    <svg class="t3" width="16" height="14"><path d="M1 5h3l4-4v12L4 9H1z" fill="none" stroke="#fff"/><path d="M10 4q2 3 0 6M12 2q3 5 0 10" fill="none" stroke="#fff"/></svg>
    <span class="zh">中</span>
    <svg class="t5" width="16" height="18"><path d="M1 3l13-2 2 13-13 3z" fill="#f0501e"/><path d="M12 5q-5-1-6 1t3 3q4 1 2 3t-6 0" fill="none" stroke="#fff" stroke-width="1.800"/></svg>
    <span class="clock">12:19<br>2017/6/3</span>
    <svg class="notif" width="16" height="16"><path d="M.5.5h15v11h-7l-3 3v-3h-5z" fill="none" stroke="#fff"/></svg>
  </div>
</footer>
</body>
</html>
```
FILE: styles.css
```css
*{box-sizing:border-box}
html,body{margin:0;padding:0}
body{width:1366px;height:768px;overflow:hidden;position:relative;background:#f0f0f0;color:#1a1a1a;font:12px/16px "Liberation Sans","Noto Sans CJK SC",sans-serif;display:flex;flex-direction:column}
i{font-style:normal}
.defs{position:absolute}
.i{width:16px;height:16px;flex:none;display:block}
.m{font:11px/16px "Liberation Mono","Noto Sans CJK SC",monospace;letter-spacing:-.6px}

.titlebar{height:23px;background:#fff;display:flex;align-items:center;padding-left:3px;flex:none}
.app{margin-right:4px}
.title{flex:1;white-space:nowrap;letter-spacing:.41px}
.winbtn{width:48px;display:flex;justify-content:center}
.titlebar .winbtn:last-child{width:46px}
.badge{position:absolute;left:1125px;top:-28px;width:46px;height:46px;border-radius:50%;background:radial-gradient(circle at 50% 40%,#49b557,#1f8a3a);border:2px solid #cfe5cf;box-shadow:0 1px 2px #888;display:flex;align-items:flex-end;justify-content:center;color:#fff;font-weight:bold;font-size:11px;padding-bottom:3px}

.menubar{height:30px;flex:none;background:#f3f3f3;display:flex;align-items:center;padding-left:7px;gap:10px;white-space:nowrap;position:relative}
.it{display:inline-flex;align-items:center;gap:4px;white-space:nowrap}
.mol{margin-left:3px}
.mi{margin-left:-1px}
.mi2{margin-left:-5px;gap:2px}
.news{width:188px;height:29px;background:#f9f9f9;color:#05616f;line-height:29px;padding-left:29px;margin-left:-3px;margin-right:-4px}
.usr{gap:4px}
.phone{letter-spacing:.3px}
.dou{margin-left:-3px}
.bell{margin-left:-1px}
.ar{display:inline-block;width:0;height:0;border:3px solid transparent;border-top:4px solid #444;border-bottom:0;flex:none}
.ar.gr{border-top-color:#999}
.ar.dk{border-top-color:#222}
.ar8{margin-left:4px}
.more{font-size:14px;line-height:12px;font-weight:bold;color:#222;margin-left:auto}
.more-m{position:absolute;right:5px;top:5px}

.toolrow{height:31px;flex:none;background:#efefef;display:flex;gap:2px;padding:1px 0 2px 2px}
.seg{display:flex;align-items:center;background:linear-gradient(#fafafa,#f3f3f3);gap:8px}
.seg1{width:146px;padding:0 1px 0 5px;gap:5px}
.sv{margin-left:3px}
.ud{margin-left:1px}
.seg2{width:550px;padding:0 2px 0 7px;gap:7px}
.seg3{flex:1;padding:0 4px 0 3px;gap:7px}
.seg3 .ar8{margin-left:2px}
.fs{margin-left:-3px}
.sn{margin-right:-2px}
.py{margin-left:3px}
.xz{margin-left:-3px}
.xz .ar{margin-left:-2px}
.sep{display:block;width:1px;height:22px;background:#bbb;flex:none}
.off{color:#8f8f8f}
.sig{gap:8px;margin-left:3px}
.sig b{font:bold 15px/16px "Liberation Sans",sans-serif;color:#222}
.combo2{width:62px;height:23px;border:1px solid #666;display:flex;align-items:center;color:#8f8f8f;padding-left:4px;flex:none;background:#f2f2f2;white-space:nowrap}
.combo2 .sq{display:block;width:12px;height:14px;background:#e2e2e2;border:1px solid #d2d2d2;flex:none}
.nw{margin-left:6px;flex:none}
.combo2 .ar{margin-left:5px}

.main{flex:1;display:flex;min-height:0}
.nav{width:166px;flex:none;display:flex;flex-direction:column;padding-top:1px}
.navhead{height:15px;background:#0b62da;color:#fff;font-size:12px;letter-spacing:.5px;line-height:15px;display:flex;align-items:center;flex:none;margin-bottom:2px}
.navhead span{flex:1}
.navpin{margin-right:8px}
.navx{margin-right:5px}
.navbtn{height:22px;flex:none;background:#f0f0f0;border:1px solid #a8a8a8;border-right-color:#999;margin:0 1px -1px;text-align:center;line-height:20px;font-size:12px;box-shadow:inset 1px 1px #fff}
.navtools{height:27px;margin-top:1px;flex:none;background:linear-gradient(#fff,#e8e8e8);display:flex;align-items:center;padding-left:7px;gap:6px}
.treebox{height:489px;width:162px;margin-left:2px;border:2px solid #9c9c9c;background:#fff;position:relative;flex:none;margin-bottom:1px}
.tree{position:absolute;left:0;top:0;width:142px;height:465px;padding-top:1px;overflow:hidden}
.r{height:16px;display:flex;align-items:center;white-space:nowrap;position:relative}
.f{padding-left:7px}
.f .c{width:8px;height:8px;margin-right:7px;flex:none}
.f .i{margin-right:5px}
.f::before{content:"";position:absolute;left:16px;top:8px;width:6px;border-top:1px dotted #777}
.leaf{padding-left:42px}
.leaf .i{margin-right:4px;width:16px;height:16px}
.leaf::before{content:"";position:absolute;left:31px;top:0;width:11px;height:9px;border-left:1px dotted #777;border-bottom:1px dotted #777}
.leaf:not(.end)::before{height:16px;border-bottom:0;background:linear-gradient(#777,#777) 0 8px/11px 1px no-repeat}
.leaf::after{content:"";position:absolute;left:11px;top:0;height:16px;border-left:1px dotted #777}
.nop::after{display:none}
.cur .curlabel{background:none}
.cur{background:linear-gradient(#d8d8d8,#d8d8d8) 39px 0/90px 16px no-repeat}
.dlgi{width:12px;height:14px;margin-left:1px;flex:none}
.vsb{position:absolute;left:142px;top:0;width:15px;height:466px;display:flex;flex-direction:column;background:#f0f0f0}
.sbtn{height:16px;flex:none;display:flex;align-items:center;justify-content:center}
.sbtn::before{content:"";width:7px;height:7px;border-left:2px solid #555;border-top:2px solid #555;transform:translateY(2px) rotate(45deg)}
.sbtn.dn::before{transform:translateY(-2px) rotate(225deg)}
.vtrack{flex:1;position:relative}
.vthumb{position:absolute;left:0;right:0;top:65px;bottom:0;background:#c8c8c8}
.hsb{position:absolute;left:0;top:466px;width:143px;height:17px;display:flex;background:#f0f0f0;align-items:center}
.hl,.hr{width:17px;display:flex;justify-content:center;flex:none}
.hl::before,.hr::before{content:"";width:7px;height:7px;border-left:2px solid #555;border-top:2px solid #555;transform:translateX(2px) rotate(-45deg)}
.hr::before{transform:translateX(-2px) rotate(135deg)}
.hthumb{display:block;width:102px;height:15px;background:#c8c8c8}
.hr{margin-left:7px}

.work{flex:1;min-width:0;display:flex;flex-direction:column;padding-left:2px}
.toolrow2{height:27px;flex:none;padding-bottom:1px;background:linear-gradient(#fbfbfb,#f2f2f2);display:flex;align-items:center;padding-left:7px;gap:7px;white-space:nowrap}
.toolrow2 .sep{height:20px;margin:0 -1px}
.toolrow2 .sepa{margin-right:-5px}
.toolrow2 .sepb{margin-right:-2px}
.floorcombo{width:64px;height:22px;background:#fff;display:flex;align-items:center;justify-content:space-between;padding:0 3px 0 2px;margin:0 -3px 0 -2px}
.toolrow2 .it .ar{margin:0 -3px 0 2px}
.cp1{gap:3px;margin-left:-2px}
.cp2{gap:5px;margin-right:2px}
.workbody{flex:1;display:flex;min-height:0;background:#efefef}
.complist{width:191px;flex:none;padding:7px 0 0 3px;display:flex;flex-direction:column}
.search{height:24px;display:flex;align-items:center;flex:none}
.sinput{width:157px;height:24px;background:#fff;border:1px solid #888;color:#8c8c8c;padding-left:2px;line-height:21px;font-size:12px}
.sicon{margin-left:4px}
.ctree{height:563px;width:183px;margin-top:1px;border:2px solid #9c9c9c;background:#fff;position:relative}
.croot{height:16px;display:flex;align-items:center;padding-left:7px}
.croot .c{width:10px;height:10px;margin-right:6px}
.croot .i{margin-right:4px}
.z{height:16px;display:flex;align-items:center;padding-left:42px;position:relative}
.z::before{content:"";position:absolute;left:30px;top:0;height:16px;width:11px;border-left:1px dotted #777}
.z::after{content:"";position:absolute;left:31px;top:8px;width:11px;border-top:1px dotted #777}
.z.last::before{height:8px}
.g{width:13px;height:13px;margin-right:7px;flex:none}
.last{background:linear-gradient(#c5e2fa,#c5e2fa) 40px 0/68px 16px no-repeat}
.sel{background:#2a6fd0;padding:0 2px;margin-left:-2px;color:#000;line-height:16px;letter-spacing:-.6px}
.props{flex:1;min-width:0;display:flex;flex-direction:column;padding-right:5px;margin-left:3px}
.tabstrip{height:22px;flex:none;background:#fff;border-bottom:1px solid #ccc;margin-top:1px;margin-left:-3px}
.tab{display:block;width:62px;height:22px;border:1px solid #ccc;border-bottom-color:#fff;font-size:12px;text-align:center;line-height:20px;background:#fff}
.gridframe{height:567px;flex:none;margin-top:3px;border:2px solid #a8a8a8;background:#fff;display:flex}
.grid{flex:1;min-width:0}
.ghead{height:23px;display:flex;max-width:960px;background:linear-gradient(#fff,#eaeaea);border-bottom:1px solid #bbb;font-size:12px;line-height:23px}
.ghead .n{border-right:1px solid #ccc;background:none}
.ghead .l{width:190px;text-align:center}
.n{width:21px;flex:none;text-align:center;font:12px/18px "Liberation Serif",serif;background:#f0f0f0;border-right:1px solid #bbb;display:block}
.row{height:19px;max-width:960px;display:flex;border-bottom:1px solid #bbb;align-items:center}
.row .n{height:18px}
.v{padding-left:20px;position:relative;top:1px;white-space:nowrap;line-height:18px;font-size:12px}
.blue{color:#0000e0}
.gray{color:#888}
.on{background:#0078d7;color:#fff}
.on .n{background:#ffd28a;color:#7a2b8e}
.pm{position:absolute;left:3px;top:2px;width:12px;height:12px;border:1px solid #999;background:#fff;color:#111;font:bold 13px/10px "Liberation Mono",monospace;text-align:center}
.gsb{width:15px;flex:none;display:flex;flex-direction:column;background:#f0f0f0;margin-left:auto}
.gsb .sbtn{height:18px}
.gtrack{flex:1;position:relative}
.gthumb{position:absolute;left:0;right:0;top:0;height:384px;background:#c8c8c8}

.dialog{position:absolute;left:568px;top:133px;width:775px;height:569px;background:#d9e4f1;border:1px solid #555;border-top-width:2px;box-shadow:0 0 2px #666;display:flex;flex-direction:column;padding:0 6px 0 9px}
.dtitle{height:29px;flex:none;margin:0 -6px 0 -9px;padding:8px 0 0 7px;background:linear-gradient(#b9cadb,#dae5f2);color:#9aa3ad;font-size:12px}
.dtabs{height:20px;flex:none;display:flex;align-items:flex-end;margin-top:-1px}
.dt{height:18px;width:41px;background:#e6e6e6;border:1px solid #ccc;border-bottom:0;text-align:center;line-height:18px}
.dt.act{height:21px;width:45px;background:#f6f6f6;border-bottom:0;margin-bottom:-1px;z-index:1}
.dpanel{height:485px;flex:none;background:#efefef;border:1px solid #ccc;border-right:2px solid #fff;border-bottom:2px solid #fff;padding:4px 1px 0 2px;display:flex;flex-direction:column}
.dbar{display:flex;align-items:center;background:#f6f6f6;white-space:nowrap;flex:none}
.b1{height:25px;width:519px;padding-left:6px;gap:8px}
.b1 .sep,.b2 .sep{height:18px}
.b1 .it .ar{margin-left:4px}
.rcombo{width:76px;height:24px;background:linear-gradient(90deg,#fff 65px,#ececec 65px);display:flex;align-items:center;justify-content:space-between;padding:0 5px 0 2px;margin:0 -3px 0 -4px;font-size:13px}
.sc{margin-right:-8px}
.tog{height:22px;display:inline-flex;align-items:center;gap:4px;background:#ddeaf6;border:2px solid #0a84d8}
.sel1{width:51px;padding-left:2px}
.hd{margin-left:-4px}
.sh{margin-left:-1px;margin-right:-3px}
.offtx{color:#9a9a9a}
.b2{height:25px;width:161px;margin-top:4px;padding-left:6px;gap:3px}
.b2 .sep{margin:0 5px}
.rt{margin-left:-6px;margin-right:-2px;flex:none}
.pad{width:34px;justify-content:center;position:relative;margin-left:0}
.b2 span:last-child{margin-left:2px}
.canvas{width:751px;height:395px;border:2px solid #f00;background:#13171f;margin-top:2px;flex:none}
.cad{display:block}
.cad path{fill:none}
.axis path{stroke:#39404b;stroke-width:1}
.axisd path{stroke:#000;stroke-width:1;stroke-dasharray:3 4}
.dimg path{stroke:#7db85a;stroke-width:1}
.wht{stroke:#fff;stroke-width:1}
.ins{stroke:#9cc9f0;stroke-width:1;stroke-dasharray:4 2}
.redd .w4{stroke:#c4161c;stroke-width:4}
.redd .w3{stroke:#c4161c;stroke-width:3}
.redd .w2{stroke:#c4161c;stroke-width:2}
.redb path{stroke:#f00;stroke-width:3}
.redb rect{fill:#f00}
.marks rect{fill:#9a958c}
.lead{stroke:#6a6f78;stroke-dasharray:3 2}
.tgray{fill:#b8b8b8;font-size:8px}
.tgreen{fill:#0c0;font-size:8px}
.tred{fill:#f00;stroke:#f00;stroke-width:.3px;font-size:20px;letter-spacing:2.700px}
.tdim text{fill:#3d434d;font-size:13px}
.b3{height:25px;margin-top:2px;background:none;gap:0}
.i20{width:16px;height:20px;flex:none}
.i8{width:16px;height:8px;flex:none}
.o1{width:52px;padding-left:3px;margin-left:1px}
.o2{width:75px;padding-left:2px;margin-left:-1px}
.o3{width:51px;margin-left:4px;padding-left:2px}
.midp{display:inline-flex;align-items:center;gap:4px;height:24px;background:#f6f6f6;padding:0 4px;margin-left:1px;width:52px}
.dstatus{display:flex;gap:3px;margin-top:4px;height:21px;flex:none;margin-left:-2px;margin-right:-1px}
.coord{width:97px;background:#efefef;border:1px solid #ddd;line-height:20px;font-size:11px;padding-left:5px}
.hint{flex:1;background:linear-gradient(#fdfdfd,#eee);border:1px solid #ddd;line-height:19px;padding-left:2px;position:relative}
.grip{position:absolute;right:1px;bottom:1px;width:10px;height:10px;background:radial-gradient(circle,#aaa 1.200px,transparent 1.300px) 0 0/4px 4px}

.status{height:23px;flex:none;display:flex;gap:1px;padding-top:2px;background:#f0f0f0}
.cell{height:21px;background:#f3f3f3;border:1px solid #e2e2e2;line-height:19px;padding-left:2px;white-space:nowrap}
.c0{width:149px}.c1{width:78px;margin-left:1px}.c2{width:98px;margin-left:2px}.c3{width:48px;margin-left:1px;padding-left:3px}.c4{flex:1;background:#fff;font-size:12px}
.ime{position:absolute;left:1183px;top:700px;width:183px;height:28px;display:flex;align-items:center;gap:6px;background:linear-gradient(90deg,rgba(255,255,255,.0),#fff 5%)}
.imeying{color:#1c78c8;font-size:14px;margin:0 -1px 0 6px}

.taskbar{height:40px;flex:none;background:#05090c;display:flex;align-items:stretch;color:#fff}
.start{width:48px;background:#000a;display:flex;align-items:center;justify-content:center}
.win{width:16px;height:16px}
.tsearch{width:344px;background:#333;display:flex;align-items:center;padding-left:9px}
.tstext{font-size:14px;color:#8b8b8b;margin-left:7px;flex:1}
.tmic{margin-right:13px}
.tapps{display:flex;margin-left:2px;align-items:stretch;width:631px;flex:none}
.ta{width:49px;display:flex;align-items:center;justify-content:center;flex:none;position:relative}
.ta:nth-child(1){width:50px}
.tsep{display:block;width:1px;height:24px;background:#333;align-self:center;margin:0 18px 0 3px}
.act1{border-bottom:2px solid #6fb2ef}
.act2{border-bottom:2px solid #6fb2ef;background:#2e3b44;width:47px;margin-left:1px}
.tray{flex:1;display:flex;align-items:center;position:relative}
.cpu{width:48px;text-align:center;line-height:17px;font-size:12px;margin-right:19px;white-space:nowrap;flex:none}
.t1{margin-left:10px}
.t2{margin-left:9px}
.t3{margin-left:6px}
.zh{font-size:14px;margin-left:9px}
.t5{margin-left:13px}
.clock{width:72px;text-align:center;line-height:17px;margin-left:11px;white-space:nowrap}
.notif{margin-left:13px}
```
